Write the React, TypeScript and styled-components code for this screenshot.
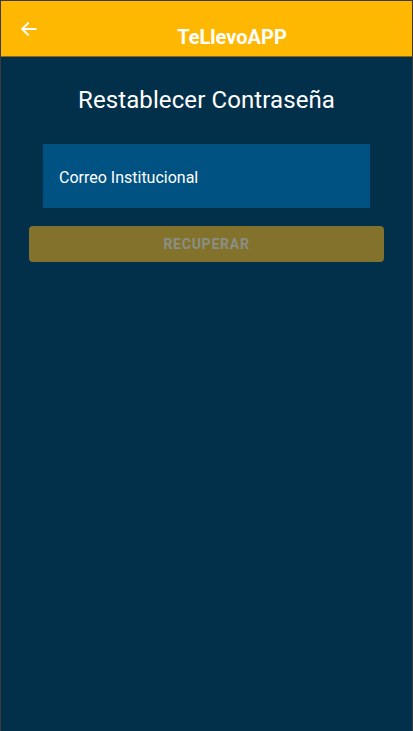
import React from "react";
import styled, { createGlobalStyle } from "styled-components";

const Global = createGlobalStyle`
  html, body { margin: 0; padding: 0; background: #02304a; }
  body { font-family: Roboto, "Noto Sans", sans-serif; }
  * { box-sizing: border-box; }
`;

const Frame = styled.div`
  width: 413px;
  height: 731px;
  border: 1px solid #3a3a3a;
  border-bottom: none;
  background: #02304a;
  display: flex;
  flex-direction: column;
  overflow: hidden;
`;

const Header = styled.header`
  height: 56px;
  flex-shrink: 0;
  background: #ffb801;
  border-bottom: 1px solid #8a6a10;
  display: flex;
  align-items: center;
`;

const BackButton = styled.button`
  width: 56px;
  height: 56px;
  border: none;
  background: transparent;
  padding: 0 0 0 18px;
  display: flex;
  align-items: center;
  justify-content: flex-start;
  cursor: pointer;
`;

const Title = styled.h1`
  flex: 1;
  margin: 0 8px 0 3px;
  text-align: center;
  color: #ffffff;
  font-size: 20px;
  font-weight: 700;
  line-height: 24px;
  padding-top: 17px;
  letter-spacing: 0;
`;

const Content = styled.main`
  flex: 1;
  display: flex;
  flex-direction: column;
  align-items: center;
  padding-top: 29px;
`;

const Heading = styled.h2`
  margin: 0;
  color: #ffffff;
  font-size: 24px;
  font-weight: 400;
  line-height: 28px;
  letter-spacing: 0.1px;
`;

const Field = styled.div`
  margin-top: 30px;
  width: 327px;
  height: 64px;
  background: #005283;
  display: flex;
  align-items: center;
  padding: 3px 0 0 16px;
  color: #ffffff;
  font-size: 16px;
`;

const SubmitButton = styled.button`
  margin-top: 18px;
  width: 355px;
  height: 36px;
  border: none;
  border-radius: 4px;
  background: #83722b;
  color: #8a8f86;
  font-family: Roboto, "Noto Sans", sans-serif;
  font-size: 14px;
  font-weight: 700;
  letter-spacing: 0.75px;
`;

const ArrowIcon = () => (
  <svg width="20" height="20" viewBox="0 0 24 24" fill="none" stroke="#ffffff" strokeWidth="2.4" strokeLinecap="round" strokeLinejoin="round">
    <path d="M20 12H4" />
    <path d="M11 5l-7 7 7 7" />
  </svg>
);

export default function App() {
  return (
    <>
      <Global />
      <Frame>
        <Header>
          <BackButton aria-label="Volver">
            <ArrowIcon />
          </BackButton>
          <Title>TeLlevoAPP</Title>
        </Header>
        <Content>
          <Heading>Restablecer Contraseña</Heading>
          <Field>Correo Institucional</Field>
          <SubmitButton disabled>RECUPERAR</SubmitButton>
        </Content>
      </Frame>
    </>
  );
}
